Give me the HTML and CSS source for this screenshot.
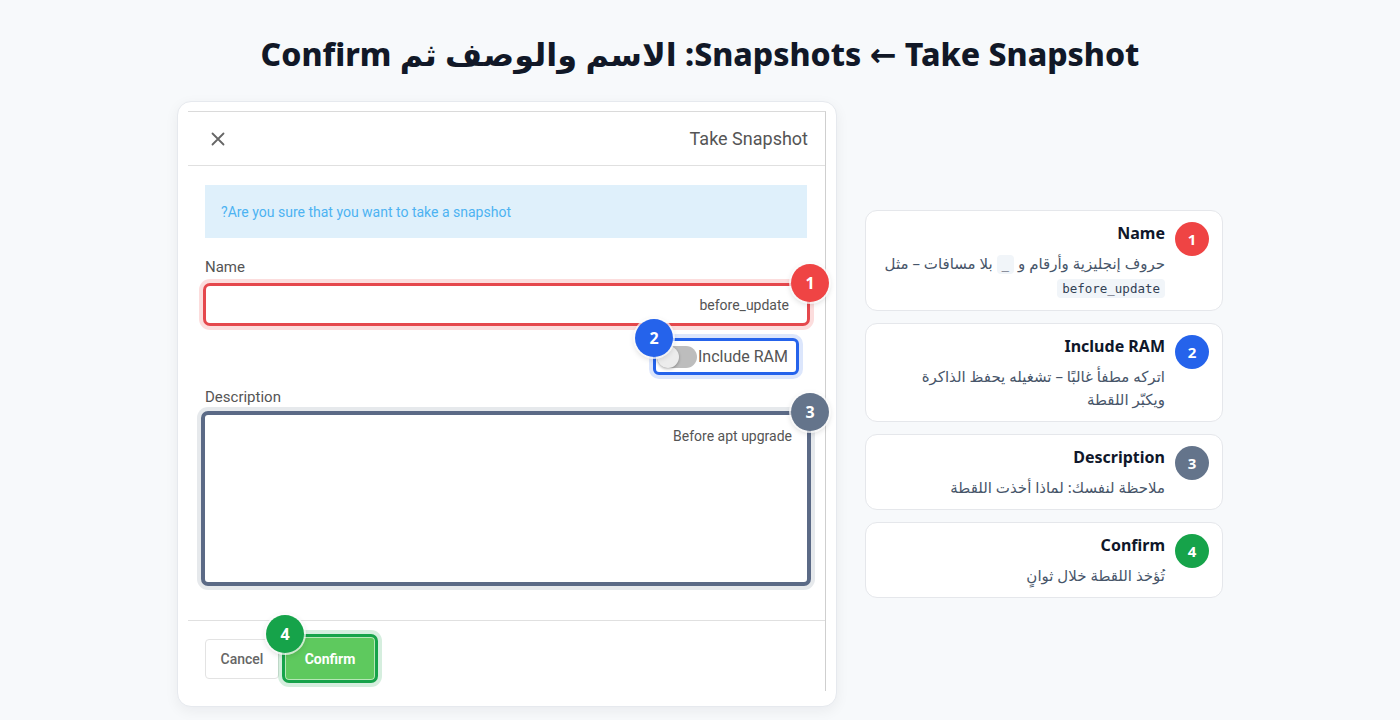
FILE: index.html
```html
<!DOCTYPE html>
<html lang="ar">
<head>
<meta charset="utf-8">
<title>Take Snapshot</title>
<link rel="stylesheet" href="styles.css">
</head>
<body>
<div class="page">
  <h1 class="headline" dir="rtl">Snapshots ← Take Snapshot: الاسم والوصف ثم Confirm</h1>
  <div class="row">
    <div class="shot">
      <div class="modal">
        <div class="modal-head">
          <svg class="close" width="14" height="14" viewBox="0 0 14 14"><path d="M1.5 1.5 L12.5 12.5 M12.5 1.5 L1.5 12.5" stroke="#666" stroke-width="1.8" stroke-linecap="round"/></svg>
          <div class="modal-title">Take Snapshot</div>
        </div>
        <div class="modal-body">
          <div class="alert"><span dir="rtl">Are you sure that you want to take a snapshot?</span></div>
          <div class="label label-name">Name</div>
          <div class="field field-name">
            <span>before_update</span>
            <span class="pin pin-red pin-tr">1</span>
          </div>
          <div class="toggle-row">
            <div class="toggle-box">
              <span class="switch"><span class="knob"></span></span>
              <span class="toggle-text">Include RAM</span>
              <span class="pin pin-blue pin-tl pin-toggle">2</span>
            </div>
          </div>
          <div class="label label-desc">Description</div>
          <div class="field field-desc">
            <span>Before apt upgrade</span>
            <span class="pin pin-slate pin-tr">3</span>
          </div>
        </div>
        <div class="modal-foot">
          <div class="btn btn-cancel">Cancel</div>
          <div class="btn btn-confirm">Confirm<span class="pin pin-green pin-tl pin-confirm">4</span></div>
        </div>
      </div>
    </div>
    <div class="notes" dir="rtl">
      <div class="note">
        <span class="num num-red">1</span>
        <div class="note-body">
          <div class="note-title">Name</div>
          <div class="note-text">حروف إنجليزية وأرقام و <code>_</code> بلا مسافات – مثل<br><code>before_update</code></div>
        </div>
      </div>
      <div class="note">
        <span class="num num-blue">2</span>
        <div class="note-body">
          <div class="note-title">Include RAM</div>
          <div class="note-text">اتركه مطفأ غالبًا – تشغيله يحفظ الذاكرة<br>ويكبّر اللقطة</div>
        </div>
      </div>
      <div class="note">
        <span class="num num-slate">3</span>
        <div class="note-body">
          <div class="note-title">Description</div>
          <div class="note-text">ملاحظة لنفسك: لماذا أخذت اللقطة</div>
        </div>
      </div>
      <div class="note">
        <span class="num num-green">4</span>
        <div class="note-body">
          <div class="note-title">Confirm</div>
          <div class="note-text">تُؤخذ اللقطة خلال ثوانٍ</div>
        </div>
      </div>
    </div>
  </div>
</div>
</body>
</html>
```

FILE: styles.css
```css
* { box-sizing: border-box; }
html, body { margin: 0; padding: 0; }
body {
  background: #f7f9fb;
  font-family: "Noto Sans", "DejaVu Sans", sans-serif;
  color: #0f172a;
  width: 1400px;
  height: 720px;
  overflow: hidden;
}
.page { padding-top: 34px; }
.headline {
  margin: 0;
  height: 40px;
  line-height: 40px;
  font-size: 32px;
  font-weight: 800;
  text-align: center;
  color: #111827;
}
.row {
  margin-top: 27px;
  display: flex;
  justify-content: center;
  align-items: center;
  gap: 28px;
}
.shot {
  width: 660px;
  height: 606px;
  background: #fff;
  border: 1px solid #e6e9ee;
  border-radius: 14px;
  box-shadow: 0 4px 14px rgba(15, 23, 42, 0.06);
  padding: 9px 10px 16px 10px;
}
.modal {
  height: 580px;
  border-top: 1px solid #dadada;
  border-right: 1px solid #cfcfcf;
  font-family: Roboto, "Liberation Sans", sans-serif;
  color: #555;
  display: flex;
  flex-direction: column;
}
.modal-head {
  height: 54px;
  border-bottom: 1px solid #e0e0e0;
  display: flex;
  align-items: center;
  justify-content: space-between;
  padding: 0 17px 0 23px;
}
.close { display: block; }
.modal-title { font-size: 18px; color: #555; }
.modal-body { padding: 19px 18px 0 17px; }
.alert {
  height: 53px;
  background: #dff0fb;
  color: #4db3f2;
  font-size: 14px;
  padding-left: 16px;
  display: flex;
  align-items: center;
  justify-content: flex-start;
}
.label { font-size: 15px; line-height: 18px; color: #555; }
.label-name { margin-top: 20px; }
.label-desc { margin-top: 13px; }
.field {
  position: relative;
  background: #fff;
  font-size: 14px;
  color: #555;
  text-align: right;
  border-radius: 7px;
}
.field-name {
  margin: 7px -3px 0 -2px;
  height: 43px;
  border: 3px solid #e5484d;
  box-shadow: 0 0 0 4px rgba(239, 68, 68, 0.18);
  padding: 0 18px;
  display: flex;
  align-items: center;
  justify-content: flex-end;
}
.field-desc {
  margin: 5px -4px 0 -4px;
  height: 175px;
  border: 4px solid #5b6a86;
  box-shadow: 0 0 0 4px rgba(100, 116, 139, 0.16);
  padding: 13px 15px 0 15px;
}
.toggle-row {
  margin-top: 12px;
  display: flex;
  justify-content: flex-end;
  padding-right: 8px;
}
.toggle-box {
  position: relative;
  height: 37px;
  border: 3px solid #2563eb;
  border-radius: 6px;
  box-shadow: 0 0 0 4px rgba(37, 99, 235, 0.16);
  padding: 0 8px 0 1px;
  display: flex;
  align-items: center;
  gap: 1px;
  background: #fff;
}
.switch {
  width: 40px;
  height: 22px;
  border-radius: 11px;
  background: #bdbdbd;
  position: relative;
  display: block;
}
.knob {
  position: absolute;
  left: 0;
  top: 0;
  width: 22px;
  height: 22px;
  border-radius: 50%;
  background: #ececec;
  box-shadow: 0 1px 3px rgba(0, 0, 0, 0.3);
}
.toggle-text { font-size: 16px; color: #555; }
.modal-foot {
  margin-top: 34px;
  border-top: 1px solid #e0e0e0;
  padding: 13px 0 0 17px;
  display: flex;
  align-items: center;
  gap: 3px;
}
.btn {
  position: relative;
  font-size: 14px;
  font-weight: 500;
  display: flex;
  align-items: center;
  justify-content: center;
  border-radius: 4px;
}
.btn-cancel {
  width: 74px;
  height: 40px;
  border: 1px solid #e3e3e3;
  color: #666;
  background: #fff;
}
.btn-confirm {
  width: 96px;
  height: 49px;
  border: 3px solid #16a34a;
  border-radius: 7px;
  background: #5ec95e;
  color: #fff;
  font-weight: 700;
  box-shadow: 0 0 0 4px rgba(22, 163, 74, 0.18), inset 0 0 0 1px rgba(255, 255, 255, 0.55);
}
.pin {
  position: absolute;
  width: 38px;
  height: 38px;
  border-radius: 50%;
  color: #fff;
  font-family: "Noto Sans", "DejaVu Sans", sans-serif;
  font-weight: 700;
  font-size: 16px;
  display: flex;
  align-items: center;
  justify-content: center;
  box-shadow: 0 0 0 2px rgba(255, 255, 255, 0.7), 0 2px 6px rgba(0, 0, 0, 0.18);
}
.pin-tr { top: -22px; right: -22px; }
.pin-tl { top: -22px; left: -22px; }
.pin-toggle { left: -21px; }
.pin-confirm { left: -19px; }
.pin-red, .num-red { background: #ef4444; }
.pin-blue, .num-blue { background: #2563eb; }
.pin-slate, .num-slate { background: #64748b; }
.pin-green, .num-green { background: #16a34a; }

.notes {
  width: 358px;
  display: flex;
  flex-direction: column;
  gap: 12px;
}
.note {
  background: #fff;
  border: 1px solid #e5e7eb;
  border-radius: 12px;
  padding: 11px 13px 10px 13px;
  display: flex;
  align-items: flex-start;
  gap: 10px;
}
.num {
  flex: none;
  width: 34px;
  height: 34px;
  border-radius: 50%;
  color: #fff;
  font-weight: 700;
  font-size: 15px;
  display: flex;
  align-items: center;
  justify-content: center;
}
.note-body { flex: 1; }
.note-title {
  font-size: 16px;
  line-height: 22px;
  font-weight: 700;
  color: #0f172a;
}
.note-text {
  margin-top: 8px;
  font-size: 15px;
  line-height: 23px;
  color: #475569;
  white-space: nowrap;
}
.note-text code {
  font-family: "DejaVu Sans Mono", "Liberation Mono", monospace;
  font-size: 12.5px;
  background: #f1f5f9;
  border-radius: 4px;
  padding: 2px 5px;
  color: #334155;
}
```
